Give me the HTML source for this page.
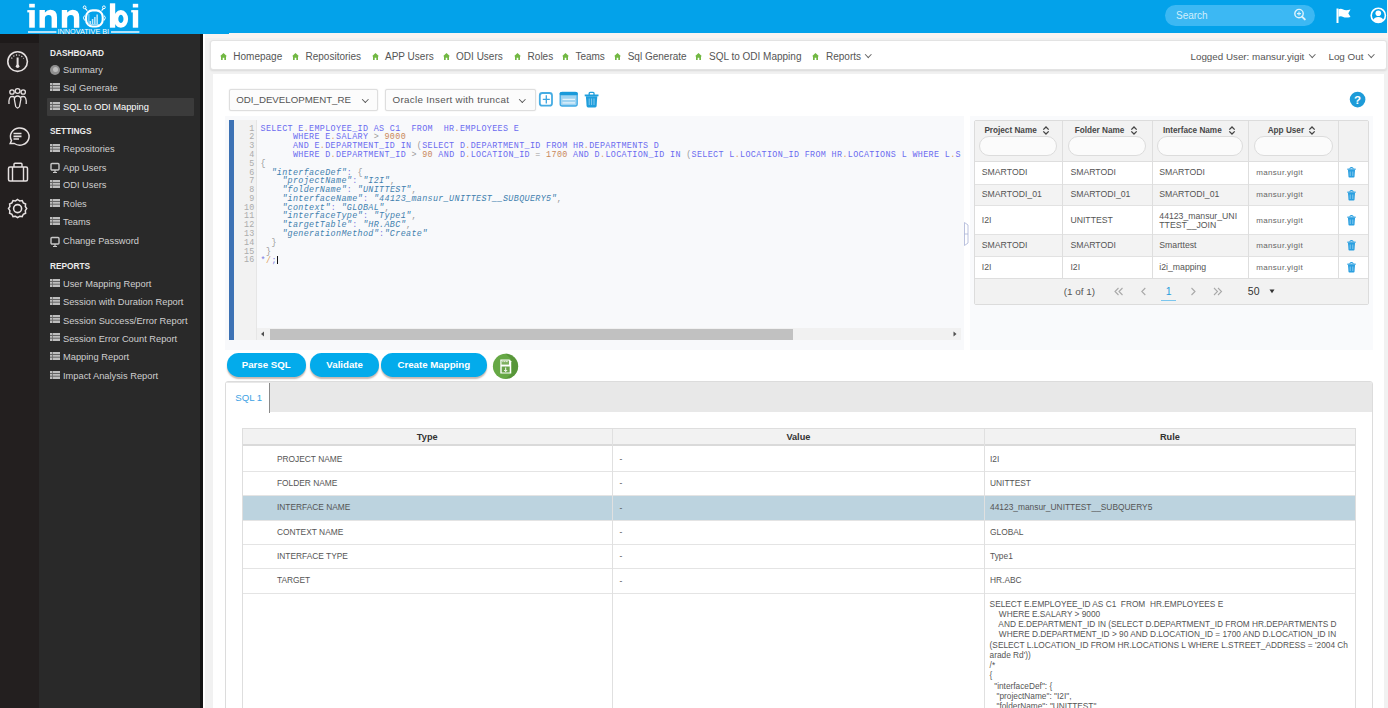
<!DOCTYPE html>
<html><head><meta charset="utf-8">
<style>
*{box-sizing:border-box;margin:0;padding:0}
html,body{width:1388px;height:708px;overflow:hidden;background:#f1f1f1;font-family:"Liberation Sans",sans-serif;position:relative}
.a{position:absolute}
#hdr{left:0;top:0;width:1387px;height:33px;background:#03a2ea}
#side{left:0;top:34px;width:202px;height:674px;background:#292929}
#icol{left:0;top:34px;width:39px;height:674px;background:#231f1f}
#sline{left:199.5px;top:34px;width:3px;height:674px;background:#141414}
#swhite{left:202.5px;top:33px;width:2.5px;height:675px;background:#fff}
#crumb{left:209.5px;top:40px;width:1177.5px;height:29.5px;background:#fff;border:1px solid #e3e3e3;border-radius:3px;box-shadow:0 1px 2px rgba(0,0,0,.1)}
#panel{left:213px;top:74px;width:1171px;height:640px;background:#fff}

.nv{position:absolute;left:63px;font-size:9.3px;color:#cfcfcf;line-height:12px;white-space:nowrap}
.nh{position:absolute;left:50px;font-size:8.3px;font-weight:bold;color:#ececec;line-height:12px;white-space:nowrap}
.li{position:absolute;left:50px;width:10px;height:8px}
.li i{position:absolute;left:0;width:10px;height:1.4px;background:#bdbdbd}
.li b{position:absolute;left:2px;top:0;width:1px;height:8px;background:#262626}

.bc{position:absolute;top:51px;font-size:10px;color:#555;line-height:12px;white-space:nowrap}
.hs{position:absolute;top:52.8px;width:7px;height:7px}
.chev{position:absolute;width:6px;height:6px;border-right:1.1px solid #666;border-bottom:1.1px solid #666;transform:rotate(45deg)}

.dd{position:absolute;top:89.2px;height:21.4px;background:#fcfcfc;border:1px solid #dedede;border-radius:2px;box-shadow:0 1px 1px rgba(0,0,0,.04)}
.ddt{position:absolute;top:94.3px;color:#555;line-height:12px;white-space:nowrap}
#ed{left:225px;top:116.3px;width:738.7px;height:234px;background:#f8f9fb}
#code{position:absolute;left:260.6px;top:124.6px;font-family:"Liberation Mono",monospace;font-size:8.4px;letter-spacing:0.36px;line-height:8.78px;white-space:pre;color:#6b6bf0}
#lnum{position:absolute;left:236px;width:18.6px;top:124.6px;font-family:"Liberation Mono",monospace;font-size:8.4px;letter-spacing:0.33px;line-height:8.78px;white-space:pre;color:#ababab;text-align:right}
.o{color:#e0a060}.n{color:#c9885a}.g{color:#9a9a9a}.p{color:#7b7be0}
.s{color:#3f7fae;font-style:italic}.c{color:#8a8aa0}

.th{position:absolute;font-size:8.2px;font-weight:bold;color:#474747;line-height:10px;white-space:nowrap}
.fi{position:absolute;top:135.5px;height:20.6px;background:#fbfbfb;border:1px solid #dcdcdc;border-radius:10.3px}
.td{position:absolute;font-size:8.7px;color:#555;line-height:9.2px;white-space:nowrap}
.sort{position:absolute;width:8px;height:9px}

.btn{position:absolute;top:353.4px;height:23.4px;border-radius:11.7px;background:#03abeb;color:#fff;font-weight:bold;font-size:9.7px;line-height:23px;text-align:center;box-shadow:0 2px 1.5px rgba(130,100,85,.45)}
.bt{position:absolute;font-size:8.4px;color:#555;line-height:10px;white-space:nowrap}
</style></head><body>
<div id="hdr" class="a"></div>
<svg class="a" style="left:0;top:0;z-index:5" width="160" height="34" viewBox="0 0 160 34">
<g fill="#fff">
<rect x="29.2" y="3.8" width="5.6" height="3.7"/>
<rect x="29.2" y="10.1" width="5.6" height="17.6"/>
<rect x="27.3" y="10.1" width="2.5" height="2.3"/>
<rect x="131.2" y="10.1" width="2.5" height="2.3"/>
<rect x="132.8" y="3.8" width="5.4" height="3.7"/>
<rect x="132.8" y="10.1" width="5.4" height="17.6"/>
<rect x="109.9" y="3.3" width="5.3" height="24.4"/>
<path d="M39.5 10.1H44.9V12.6Q47.1 9.8 50.3 9.8Q57.0 9.8 57.0 17.2V27.7H51.6V18Q51.6 14.9 48.7 14.9Q44.9 14.9 44.9 18.5V27.7H39.5Z" fill="#fff"/><path d="M61.8 10.1H67.2V12.6Q69.39999999999999 9.8 72.6 9.8Q79.3 9.8 79.3 17.2V27.7H73.89999999999999V18Q73.89999999999999 14.9 71.0 14.9Q67.2 14.9 67.2 18.5V27.7H61.8Z" fill="#fff"/>
</g>
<g fill="none" stroke="#fff">


<ellipse cx="120.9" cy="18.9" rx="4.9" ry="6.5" stroke-width="4.6"/>
<rect x="86.1" y="10.4" width="16.6" height="16.1" rx="6.5" stroke-width="2.1"/>
<path d="M84.6 15.5Q82.3 17.5 84.6 20.5M104.2 15.5Q106.5 17.5 104.2 20.5" stroke-width="1"/>
<path d="M85.2 8.3L87.3 10.6M103.5 8.3L101.6 10.6" stroke-width="1.2"/>
<circle cx="84.6" cy="7.3" r="1.4" stroke-width="1"/>
<circle cx="103.9" cy="7.3" r="1.4" stroke-width="1"/>
</g>
<g fill="#bfe6fb">
<rect x="89.5" y="21" width="1.5" height="3"/>
<rect x="91.8" y="19" width="1.5" height="5"/>
<rect x="94.1" y="17" width="1.5" height="7"/>
<rect x="96.4" y="14.5" width="1.5" height="9.5"/>
<rect x="88.4" y="24.1" width="11" height="0.8"/>
<rect x="88.5" y="14" width="0.8" height="10.5"/>
</g>
<g fill="#b3e3fb">
<rect x="28" y="31" width="28.4" height="2"/>
<rect x="111" y="31" width="28.4" height="2"/>
</g>
<text x="57.6" y="34.4" font-family="Liberation Sans" font-size="6.4" fill="#fff" textLength="51.5" lengthAdjust="spacingAndGlyphs">INNOVATIVE BI</text>
</svg>
<div class="a" style="left:1165px;top:5px;width:150px;height:21px;border-radius:11px;background:#3cb8f3"></div>
<div class="a" style="left:1176px;top:10px;font-size:10px;color:#d0eefc;line-height:12px">Search</div>
<svg class="a" style="left:1290px;top:5px" width="20" height="20" viewBox="0 0 20 20"><circle cx="9" cy="8.6" r="4.2" fill="none" stroke="#dff3fd" stroke-width="1.4"/><path d="M9 6.6v4M7 8.6h4" stroke="#dff3fd" stroke-width="1.1"/><path d="M12 11.6l2.8 2.8" stroke="#dff3fd" stroke-width="2" stroke-linecap="round"/></svg>
<svg class="a" style="left:1334px;top:6px" width="20" height="20" viewBox="0 0 20 20"><path d="M3.5 2.5V17" stroke="#fff" stroke-width="2"/><path d="M4.5 3.3Q7 2.2 9.2 3.5Q11.5 4.8 16.5 3.6L14.3 7.3L16.5 11Q11.5 12.2 9.2 10.9Q7 9.6 4.5 10.7Z" fill="#fff"/></svg>
<svg class="a" style="left:1368px;top:5px" width="20" height="22" viewBox="0 0 20 22"><circle cx="10.3" cy="10.4" r="7.1" fill="none" stroke="#fff" stroke-width="1.6"/><circle cx="10.3" cy="8.3" r="2.8" fill="#fff"/><path d="M5.2 15.2Q6.5 11.9 10.3 11.9Q14.1 11.9 15.4 15.2Q13.5 17.3 10.3 17.3Q7.1 17.3 5.2 15.2Z" fill="#fff"/></svg>
<div id="side" class="a"></div>
<div id="icol" class="a"></div>
<div id="sline" class="a"></div><div id="swhite" class="a"></div><div class="a" style="left:205px;top:33px;width:1183px;height:5px;background:#f8f4f2"></div><div class="a" style="left:0;top:33px;width:229px;height:1px;background:#03a2ea"></div>
<div class="a" style="left:0;top:34px;width:39px;height:9px;background:#1e1a1a"></div>
<div class="a" style="left:0;top:43px;width:39px;height:37px;background:#272323"></div>
<div class="a" style="left:46.5px;top:98px;width:147px;height:18px;background:#3b3b3b;border-radius:1px"></div>
<div class="nh" style="top:46.5px">DASHBOARD</div>
<div class="nh" style="top:125.4px">SETTINGS</div>
<div class="nh" style="top:260.0px">REPORTS</div>
<div class="nv" style="top:63.7px;color:#cfcfcf">Summary</div>
<div class="a" style="left:50px;top:64.7px;width:10px;height:10px;border-radius:50%;background:#8f8f8f"><div class="a" style="left:3px;top:2px;width:5px;height:5px;border-radius:50%;background:#bdbdbd"></div></div>
<div class="nv" style="top:82.0px;color:#cfcfcf">Sql Generate</div>
<svg class="a" style="left:50px;top:83px" width="10" height="8" viewBox="0 0 10 8"><rect x="0" y="0" width="10" height="8" fill="#bdbdbd"/><path d="M0 2.5H10M0 5.2H10" stroke="#5a5a5a" stroke-width="0.9"/><path d="M2.5 0V8" stroke="#6a6a6a" stroke-width="0.8"/></svg>
<div class="nv" style="top:100.8px;color:#ffffff">SQL to ODI Mapping</div>
<svg class="a" style="left:50px;top:102px" width="10" height="8" viewBox="0 0 10 8"><rect x="0" y="0" width="10" height="8" fill="#bdbdbd"/><path d="M0 2.5H10M0 5.2H10" stroke="#5a5a5a" stroke-width="0.9"/><path d="M2.5 0V8" stroke="#6a6a6a" stroke-width="0.8"/></svg>
<div class="nv" style="top:143.2px;color:#cfcfcf">Repositories</div>
<svg class="a" style="left:50px;top:144px" width="10" height="8" viewBox="0 0 10 8"><rect x="0" y="0" width="10" height="8" fill="#bdbdbd"/><path d="M0 2.5H10M0 5.2H10" stroke="#5a5a5a" stroke-width="0.9"/><path d="M2.5 0V8" stroke="#6a6a6a" stroke-width="0.8"/></svg>
<div class="nv" style="top:161.6px;color:#cfcfcf">App Users</div>
<svg class="a" style="left:49px;top:162.1px" width="12" height="12" viewBox="0 0 12 12"><rect x="2" y="1.5" width="8" height="6.5" rx="1" fill="none" stroke="#c8c8c8" stroke-width="1.4"/><path d="M6 8v2.5M4 10.5h4" stroke="#c8c8c8" stroke-width="1.2"/></svg>
<div class="nv" style="top:179.4px;color:#cfcfcf">ODI Users</div>
<svg class="a" style="left:50px;top:180px" width="10" height="8" viewBox="0 0 10 8"><rect x="0" y="0" width="10" height="8" fill="#bdbdbd"/><path d="M0 2.5H10M0 5.2H10" stroke="#5a5a5a" stroke-width="0.9"/><path d="M2.5 0V8" stroke="#6a6a6a" stroke-width="0.8"/></svg>
<div class="nv" style="top:197.8px;color:#cfcfcf">Roles</div>
<svg class="a" style="left:50px;top:199px" width="10" height="8" viewBox="0 0 10 8"><rect x="0" y="0" width="10" height="8" fill="#bdbdbd"/><path d="M0 2.5H10M0 5.2H10" stroke="#5a5a5a" stroke-width="0.9"/><path d="M2.5 0V8" stroke="#6a6a6a" stroke-width="0.8"/></svg>
<div class="nv" style="top:216.2px;color:#cfcfcf">Teams</div>
<svg class="a" style="left:50px;top:217px" width="10" height="8" viewBox="0 0 10 8"><rect x="0" y="0" width="10" height="8" fill="#bdbdbd"/><path d="M0 2.5H10M0 5.2H10" stroke="#5a5a5a" stroke-width="0.9"/><path d="M2.5 0V8" stroke="#6a6a6a" stroke-width="0.8"/></svg>
<div class="nv" style="top:235.0px;color:#cfcfcf">Change Password</div>
<svg class="a" style="left:49px;top:235.5px" width="12" height="12" viewBox="0 0 12 12"><rect x="2" y="1.5" width="8" height="6.5" rx="1" fill="none" stroke="#c8c8c8" stroke-width="1.4"/><path d="M6 8v2.5M4 10.5h4" stroke="#c8c8c8" stroke-width="1.2"/></svg>
<div class="nv" style="top:277.5px;color:#cfcfcf">User Mapping Report</div>
<svg class="a" style="left:50px;top:279px" width="10" height="8" viewBox="0 0 10 8"><rect x="0" y="0" width="10" height="8" fill="#bdbdbd"/><path d="M0 2.5H10M0 5.2H10" stroke="#5a5a5a" stroke-width="0.9"/><path d="M2.5 0V8" stroke="#6a6a6a" stroke-width="0.8"/></svg>
<div class="nv" style="top:296.0px;color:#cfcfcf">Session with Duration Report</div>
<svg class="a" style="left:50px;top:297px" width="10" height="8" viewBox="0 0 10 8"><rect x="0" y="0" width="10" height="8" fill="#bdbdbd"/><path d="M0 2.5H10M0 5.2H10" stroke="#5a5a5a" stroke-width="0.9"/><path d="M2.5 0V8" stroke="#6a6a6a" stroke-width="0.8"/></svg>
<div class="nv" style="top:314.5px;color:#cfcfcf">Session Success/Error Report</div>
<svg class="a" style="left:50px;top:315px" width="10" height="8" viewBox="0 0 10 8"><rect x="0" y="0" width="10" height="8" fill="#bdbdbd"/><path d="M0 2.5H10M0 5.2H10" stroke="#5a5a5a" stroke-width="0.9"/><path d="M2.5 0V8" stroke="#6a6a6a" stroke-width="0.8"/></svg>
<div class="nv" style="top:332.5px;color:#cfcfcf">Session Error Count Report</div>
<svg class="a" style="left:50px;top:333px" width="10" height="8" viewBox="0 0 10 8"><rect x="0" y="0" width="10" height="8" fill="#bdbdbd"/><path d="M0 2.5H10M0 5.2H10" stroke="#5a5a5a" stroke-width="0.9"/><path d="M2.5 0V8" stroke="#6a6a6a" stroke-width="0.8"/></svg>
<div class="nv" style="top:351.0px;color:#cfcfcf">Mapping Report</div>
<svg class="a" style="left:50px;top:352px" width="10" height="8" viewBox="0 0 10 8"><rect x="0" y="0" width="10" height="8" fill="#bdbdbd"/><path d="M0 2.5H10M0 5.2H10" stroke="#5a5a5a" stroke-width="0.9"/><path d="M2.5 0V8" stroke="#6a6a6a" stroke-width="0.8"/></svg>
<div class="nv" style="top:369.5px;color:#cfcfcf">Impact Analysis Report</div>
<svg class="a" style="left:50px;top:371px" width="10" height="8" viewBox="0 0 10 8"><rect x="0" y="0" width="10" height="8" fill="#bdbdbd"/><path d="M0 2.5H10M0 5.2H10" stroke="#5a5a5a" stroke-width="0.9"/><path d="M2.5 0V8" stroke="#6a6a6a" stroke-width="0.8"/></svg>
<svg class="a" style="left:0;top:44px" width="39" height="180" viewBox="0 44 39 180">
<g fill="none" stroke="#e6e1e1" stroke-width="1.6">
<circle cx="17.6" cy="61.6" r="9.8"/>
<path d="M11.5 58.5A7 7 0 0 1 23.7 58.5" stroke-width="1.2" stroke-dasharray="1.2 1.6"/>
<path d="M17.6 57.5V65" stroke-width="2"/>
<circle cx="17.6" cy="66.3" r="1.8" fill="#e6e1e1" stroke="none"/>
<circle cx="12" cy="92" r="2.2" stroke-width="1.3"/><circle cx="17.6" cy="91" r="2.4" stroke-width="1.3"/><circle cx="23.2" cy="92" r="2.2" stroke-width="1.3"/>
<path d="M9 104Q8.5 96.5 12 96.5Q14 96.5 14.5 97.5M26.2 104Q26.7 96.5 23.2 96.5Q21.2 96.5 20.7 97.5M14.3 99Q14.8 96 17.6 96Q20.4 96 20.9 99L19.5 106.5Q17.6 109.5 15.7 106.5Z" stroke-width="1.3"/>
<path d="M10.2 143.5L11.5 140.5A9.3 8.6 0 1 1 14.3 143.5Z" stroke-width="1.5"/>
<path d="M13.5 133.5H21.5M13.5 136.3H21.5M13.5 139H19" stroke-width="1.7"/>
<rect x="8.5" y="167" width="19" height="14" rx="1.5" stroke-width="1.5"/>
<path d="M14 167V164.3Q14 163.3 15 163.3H21Q22 163.3 22 164.3V167M12.5 167V181M23.5 167V181" stroke-width="1.4"/>
<path d="M17.6 199.5l2.1 1.4 2.5-.3 1.1 2.3 2.3 1.1-.3 2.5 1.4 2.1-1.4 2.1.3 2.5-2.3 1.1-1.1 2.3-2.5-.3-2.1 1.4-2.1-1.4-2.5.3-1.1-2.3-2.3-1.1.3-2.5-1.4-2.1 1.4-2.1-.3-2.5 2.3-1.1 1.1-2.3 2.5.3z" stroke-width="1.5"/>
<circle cx="17.6" cy="208.6" r="4" stroke-width="1.6"/>
</g></svg>
<div id="crumb" class="a"></div>
<div id="panel" class="a"></div>
<svg class="hs" style="left:219.5px" viewBox="0 0 7 7"><path d="M3.5 0L7 3.3H6V7H4.3V4.8H2.7V7H1V3.3H0Z" fill="#72b843"/></svg>
<div class="bc" style="left:233.3px">Homepage</div>
<svg class="hs" style="left:291.5px" viewBox="0 0 7 7"><path d="M3.5 0L7 3.3H6V7H4.3V4.8H2.7V7H1V3.3H0Z" fill="#72b843"/></svg>
<div class="bc" style="left:305.5px">Repositories</div>
<svg class="hs" style="left:371.5px" viewBox="0 0 7 7"><path d="M3.5 0L7 3.3H6V7H4.3V4.8H2.7V7H1V3.3H0Z" fill="#72b843"/></svg>
<div class="bc" style="left:385px">APP Users</div>
<svg class="hs" style="left:442.8px" viewBox="0 0 7 7"><path d="M3.5 0L7 3.3H6V7H4.3V4.8H2.7V7H1V3.3H0Z" fill="#72b843"/></svg>
<div class="bc" style="left:456.1px">ODI Users</div>
<svg class="hs" style="left:513.7px" viewBox="0 0 7 7"><path d="M3.5 0L7 3.3H6V7H4.3V4.8H2.7V7H1V3.3H0Z" fill="#72b843"/></svg>
<div class="bc" style="left:527.6px">Roles</div>
<svg class="hs" style="left:562.0px" viewBox="0 0 7 7"><path d="M3.5 0L7 3.3H6V7H4.3V4.8H2.7V7H1V3.3H0Z" fill="#72b843"/></svg>
<div class="bc" style="left:575.4px">Teams</div>
<svg class="hs" style="left:613.5px" viewBox="0 0 7 7"><path d="M3.5 0L7 3.3H6V7H4.3V4.8H2.7V7H1V3.3H0Z" fill="#72b843"/></svg>
<div class="bc" style="left:627.7px">Sql Generate</div>
<svg class="hs" style="left:695.2px" viewBox="0 0 7 7"><path d="M3.5 0L7 3.3H6V7H4.3V4.8H2.7V7H1V3.3H0Z" fill="#72b843"/></svg>
<div class="bc" style="left:709px">SQL to ODI Mapping</div>
<svg class="hs" style="left:812.2px" viewBox="0 0 7 7"><path d="M3.5 0L7 3.3H6V7H4.3V4.8H2.7V7H1V3.3H0Z" fill="#72b843"/></svg>
<div class="bc" style="left:826px">Reports</div>
<div class="chev" style="left:865.5px;top:52px;width:4.5px;height:4.5px"></div>
<div class="bc" style="left:1190.5px;font-size:9.8px">Logged User: mansur.yigit</div>
<div class="chev" style="left:1309.5px;top:52px;width:4.5px;height:4.5px"></div>
<div class="bc" style="left:1328.4px;font-size:9.9px">Log Out</div>
<div class="chev" style="left:1368.5px;top:52px;width:4.5px;height:4.5px"></div>
<div class="dd" style="left:229px;width:149.3px;box-shadow:0 0 1.5px rgba(0,0,0,.12)"></div>
<div class="ddt" style="left:236.3px;font-size:9.7px">ODI_DEVELOPMENT_RE</div>
<div class="chev" style="left:363.3px;top:97.3px;width:4.6px;height:4.6px;border-color:#555"></div>
<div class="dd" style="left:385.3px;width:151px;box-shadow:0 0 1.5px rgba(0,0,0,.12)"></div>
<div class="ddt" style="left:392.5px;font-size:9.8px;letter-spacing:0.3px;top:94.3px">Oracle Insert with truncat</div>
<div class="chev" style="left:519.7px;top:97.3px;width:4.6px;height:4.6px;border-color:#555"></div>
<svg class="a" style="left:538px;top:91px" width="62" height="18" viewBox="538 91 62 18">
<rect x="539.8" y="93" width="12.2" height="12.7" rx="2.5" fill="none" stroke="#45ace3" stroke-width="1.8"/>
<path d="M546.3 95.3V103.6M542.8 99.4H549.8" stroke="#3aa4e0" stroke-width="1.3"/>
<rect x="560.2" y="92.4" width="17" height="13.6" rx="2" fill="#9fd3f1" stroke="#3fa9e4" stroke-width="1.3"/>
<rect x="559.6" y="92" width="18.2" height="3.3" rx="1.5" fill="#1b9ada"/>
<path d="M562.5 99.3H575M562.5 102.8H575" stroke="#e5f4fc" stroke-width="1.2"/>
<path d="M584.7 95.4H598.5" stroke="#1f9edc" stroke-width="1.8"/>
<path d="M589.2 95V93.3Q589.2 92.4 590.1 92.4H593.1Q594 92.4 594 93.3V95" fill="none" stroke="#1f9edc" stroke-width="1.3"/>
<path d="M585.9 96.2H597.3L596.6 106.1Q596.5 107.4 595.2 107.4H588Q586.7 107.4 586.6 106.1Z" fill="#1f9edc"/>
<path d="M589.2 98.5V105M591.6 98.5V105M594 98.5V105" stroke="#8ccdef" stroke-width="0.9"/>
</svg>
<svg class="a" style="left:1348px;top:91px" width="19" height="18" viewBox="0 0 19 18"><circle cx="9.6" cy="8.6" r="7.8" fill="#1d9bd8"/><text x="9.6" y="12.7" font-family="Liberation Sans" font-weight="bold" font-size="11.5" fill="#fff" text-anchor="middle">?</text></svg>
<div id="ed" class="a"></div>
<div class="a" style="left:229px;top:120.4px;width:4.5px;height:220px;background:#3d72b4"></div>
<div class="a" style="left:233.5px;top:120.4px;width:23.5px;height:220px;background:#f2f2f2;border-right:1px solid #e6e6e6"></div>
<div id="lnum">1
2
3
4
5
6
7
8
9
10
11
12
13
14
15
16</div>
<div id="code">SELECT E<span class="o">.</span>EMPLOYEE_ID AS C1  FROM  HR<span class="o">.</span>EMPLOYEES E
      WHERE E<span class="o">.</span>SALARY <span class="g">&gt;</span> <span class="n">9000</span>
      AND E<span class="o">.</span>DEPARTMENT_ID IN <span class="g">(</span>SELECT D<span class="o">.</span>DEPARTMENT_ID FROM HR<span class="o">.</span>DEPARTMENTS D
      WHERE D<span class="o">.</span>DEPARTMENT_ID <span class="g">&gt;</span> <span class="n">90</span> AND D<span class="o">.</span>LOCATION_ID <span class="g">=</span> <span class="n">1700</span> AND D<span class="o">.</span>LOCATION_ID IN <span class="g">(</span>SELECT L<span class="o">.</span>LOCATION_ID FROM HR<span class="o">.</span>LOCATIONS L WHERE L<span class="o">.</span>S
<span class="g">{</span>
  <span class="s">"interfaceDef"</span><span class="p">:</span> <span class="g">{</span>
    <span class="s">"projectName"</span><span class="p">:</span> <span class="s">"I2I"</span><span class="g">,</span>
    <span class="s">"folderName"</span><span class="p">:</span> <span class="s">"UNITTEST"</span><span class="g">,</span>
    <span class="s">"interfaceName"</span><span class="p">:</span> <span class="s">"44123_mansur_UNITTEST__SUBQUERY5"</span><span class="g">,</span>
    <span class="s">"context"</span><span class="p">:</span> <span class="s">"GLOBAL"</span><span class="g">,</span>
    <span class="s">"interfaceType"</span><span class="p">:</span> <span class="s">"Type1"</span><span class="g">,</span>
    <span class="s">"targetTable"</span><span class="p">:</span> <span class="s">"HR.ABC"</span><span class="g">,</span>
    <span class="s">"generationMethod"</span><span class="p">:</span><span class="s">"Create"</span>
  <span class="g">}</span>
 <span class="g">}</span>
<span class="p">*</span><span class="o">/</span><span class="p">;</span><span style="display:inline-block;width:1px;height:8px;background:#111;vertical-align:-1px"></span></div>
<div class="a" style="left:257px;top:328px;width:704px;height:12px;background:#f1f1f1"></div>
<div class="a" style="left:270px;top:329px;width:523px;height:10.5px;background:#c1c1c1"></div>
<svg class="a" style="left:256px;top:328px" width="14" height="12" viewBox="0 0 14 12"><path d="M5 6L8 3.5V8.5Z" fill="#505050"/></svg>
<svg class="a" style="left:948px;top:328px" width="13" height="12" viewBox="0 0 13 12"><path d="M8.5 6L5.5 3.5V8.5Z" fill="#505050"/></svg>
<svg class="a" style="left:963px;top:220px" width="7" height="28" viewBox="0 0 7 28"><path d="M1.5 2.5L5 5V23L1.5 25.5Z" fill="none" stroke="#a9b3d6" stroke-width="0.8"/><path d="M1.5 14H5" stroke="#a9b3d6" stroke-width="0.8"/></svg>
<div class="a" style="left:969.5px;top:115.8px;width:403.2px;height:234.5px;background:#f9fafc"></div>
<div class="a" style="left:974.2px;top:120.3px;width:394.8px;height:184.3px;background:#fff;border:1px solid #dcdcdc;border-radius:2px;overflow:hidden"><div class="a" style="left:0;top:0;width:100%;height:41.2px;background:#f2f2f2;border-bottom:1px solid #dedede"></div><div class="a" style="left:0;top:62.7px;width:100%;height:22.5px;background:#f3f3f3;border-top:1px solid #e2e2e2;border-bottom:1px solid #e2e2e2"></div><div class="a" style="left:0;top:112.8px;width:100%;height:22.8px;background:#f3f3f3;border-top:1px solid #e2e2e2;border-bottom:1px solid #e2e2e2"></div><div class="a" style="left:0;top:157px;width:100%;height:27px;background:#f2f2f2;border-top:1px solid #dedede"></div></div>
<div class="a" style="left:1061.9px;top:121px;width:1px;height:157px;background:#dedede"></div>
<div class="a" style="left:1151.7px;top:121px;width:1px;height:157px;background:#dedede"></div>
<div class="a" style="left:1248.1px;top:121px;width:1px;height:157px;background:#dedede"></div>
<div class="a" style="left:1337.7px;top:121px;width:1px;height:157px;background:#dedede"></div>
<div class="th" style="left:984.4px;top:126px">Project Name</div>
<svg class="sort" style="left:1042.0px;top:126.2px" viewBox="0 0 8 9"><path d="M1.3 3.6L4 1L6.7 3.6M1.3 5.4L4 8L6.7 5.4" fill="none" stroke="#444" stroke-width="1.3"/></svg>
<div class="th" style="left:1074.7px;top:126px">Folder Name</div>
<svg class="sort" style="left:1129.6px;top:126.2px" viewBox="0 0 8 9"><path d="M1.3 3.6L4 1L6.7 3.6M1.3 5.4L4 8L6.7 5.4" fill="none" stroke="#444" stroke-width="1.3"/></svg>
<div class="th" style="left:1163px;top:126px">Interface Name</div>
<svg class="sort" style="left:1228.0px;top:126.2px" viewBox="0 0 8 9"><path d="M1.3 3.6L4 1L6.7 3.6M1.3 5.4L4 8L6.7 5.4" fill="none" stroke="#444" stroke-width="1.3"/></svg>
<div class="th" style="left:1267.7px;top:126px">App User</div>
<svg class="sort" style="left:1308.4px;top:126.2px" viewBox="0 0 8 9"><path d="M1.3 3.6L4 1L6.7 3.6M1.3 5.4L4 8L6.7 5.4" fill="none" stroke="#444" stroke-width="1.3"/></svg>
<div class="fi" style="left:978.9px;width:78.0px"></div>
<div class="fi" style="left:1067.9px;width:78.0px"></div>
<div class="fi" style="left:1157px;width:86.3px"></div>
<div class="fi" style="left:1253.5px;width:79.5px"></div>
<div class="td" style="left:981.8px;top:168.1px;">SMARTODI</div>
<div class="td" style="left:1070.4px;top:168.1px;">SMARTODI</div>
<div class="td" style="left:1159.3px;top:168.1px;">SMARTODI</div>
<div class="td" style="left:1256.2px;top:168.1px;font-size:8px;letter-spacing:0.34px;color:#666;">mansur.yigit</div>
<svg class="a" style="left:1346.8px;top:167.4px" width="9" height="11" viewBox="0 0 9 11"><path d="M0.3 2.2H8.7" stroke="#2a9fe0" stroke-width="1.2"/><path d="M3 2V1.2Q3 .5 3.7 .5H5.3Q6 .5 6 1.2V2" fill="none" stroke="#2a9fe0" stroke-width="1"/><path d="M1 3H8L7.5 9.8Q7.4 10.5 6.7 10.5H2.3Q1.6 10.5 1.5 9.8Z" fill="#2a9fe0"/><path d="M3.2 4.5V9M5.8 4.5V9" stroke="#9bd3f2" stroke-width="0.8"/></svg>
<div class="td" style="left:981.8px;top:190.2px;">SMARTODI_01</div>
<div class="td" style="left:1070.4px;top:190.2px;">SMARTODI_01</div>
<div class="td" style="left:1159.3px;top:190.2px;">SMARTODI_01</div>
<div class="td" style="left:1256.2px;top:190.2px;font-size:8px;letter-spacing:0.34px;color:#666;">mansur.yigit</div>
<svg class="a" style="left:1346.8px;top:189.5px" width="9" height="11" viewBox="0 0 9 11"><path d="M0.3 2.2H8.7" stroke="#2a9fe0" stroke-width="1.2"/><path d="M3 2V1.2Q3 .5 3.7 .5H5.3Q6 .5 6 1.2V2" fill="none" stroke="#2a9fe0" stroke-width="1"/><path d="M1 3H8L7.5 9.8Q7.4 10.5 6.7 10.5H2.3Q1.6 10.5 1.5 9.8Z" fill="#2a9fe0"/><path d="M3.2 4.5V9M5.8 4.5V9" stroke="#9bd3f2" stroke-width="0.8"/></svg>
<div class="td" style="left:981.8px;top:215.6px;">I2I</div>
<div class="td" style="left:1070.4px;top:215.6px;">UNITTEST</div>
<div class="td" style="left:1159.3px;top:211.8px">44123_mansur_UNI<br>TTEST__JOIN</div>
<div class="td" style="left:1256.2px;top:215.6px;font-size:8px;letter-spacing:0.34px;color:#666;">mansur.yigit</div>
<svg class="a" style="left:1346.8px;top:214.9px" width="9" height="11" viewBox="0 0 9 11"><path d="M0.3 2.2H8.7" stroke="#2a9fe0" stroke-width="1.2"/><path d="M3 2V1.2Q3 .5 3.7 .5H5.3Q6 .5 6 1.2V2" fill="none" stroke="#2a9fe0" stroke-width="1"/><path d="M1 3H8L7.5 9.8Q7.4 10.5 6.7 10.5H2.3Q1.6 10.5 1.5 9.8Z" fill="#2a9fe0"/><path d="M3.2 4.5V9M5.8 4.5V9" stroke="#9bd3f2" stroke-width="0.8"/></svg>
<div class="td" style="left:981.8px;top:240.7px;">SMARTODI</div>
<div class="td" style="left:1070.4px;top:240.7px;">SMARTODI</div>
<div class="td" style="left:1159.3px;top:240.7px;">Smarttest</div>
<div class="td" style="left:1256.2px;top:240.7px;font-size:8px;letter-spacing:0.34px;color:#666;">mansur.yigit</div>
<svg class="a" style="left:1346.8px;top:240.0px" width="9" height="11" viewBox="0 0 9 11"><path d="M0.3 2.2H8.7" stroke="#2a9fe0" stroke-width="1.2"/><path d="M3 2V1.2Q3 .5 3.7 .5H5.3Q6 .5 6 1.2V2" fill="none" stroke="#2a9fe0" stroke-width="1"/><path d="M1 3H8L7.5 9.8Q7.4 10.5 6.7 10.5H2.3Q1.6 10.5 1.5 9.8Z" fill="#2a9fe0"/><path d="M3.2 4.5V9M5.8 4.5V9" stroke="#9bd3f2" stroke-width="0.8"/></svg>
<div class="td" style="left:981.8px;top:262.7px;">I2I</div>
<div class="td" style="left:1070.4px;top:262.7px;">I2I</div>
<div class="td" style="left:1159.3px;top:262.7px;">i2i_mapping</div>
<div class="td" style="left:1256.2px;top:262.7px;font-size:8px;letter-spacing:0.34px;color:#666;">mansur.yigit</div>
<svg class="a" style="left:1346.8px;top:262.0px" width="9" height="11" viewBox="0 0 9 11"><path d="M0.3 2.2H8.7" stroke="#2a9fe0" stroke-width="1.2"/><path d="M3 2V1.2Q3 .5 3.7 .5H5.3Q6 .5 6 1.2V2" fill="none" stroke="#2a9fe0" stroke-width="1"/><path d="M1 3H8L7.5 9.8Q7.4 10.5 6.7 10.5H2.3Q1.6 10.5 1.5 9.8Z" fill="#2a9fe0"/><path d="M3.2 4.5V9M5.8 4.5V9" stroke="#9bd3f2" stroke-width="0.8"/></svg>
<div class="td" style="left:1063.7px;top:285.8px;font-size:9.9px;line-height:11px;color:#555">(1 of 1)</div>
<svg class="a" style="left:1110px;top:286px" width="115" height="11" viewBox="1110 286 115 11">
<g fill="none" stroke="#a9a9a9" stroke-width="1.1">
<path d="M1118.5 288L1115 291.5L1118.5 295M1122.5 288L1119 291.5L1122.5 295"/>
<path d="M1145.3 288L1141.8 291.5L1145.3 295"/>
<path d="M1191.5 288L1195 291.5L1191.5 295"/>
<path d="M1214 288L1217.5 291.5L1214 295M1218 288L1221.5 291.5L1218 295"/>
</g></svg>
<div class="td" style="left:1165.8px;top:285.8px;font-size:10.5px;line-height:11px;color:#2a9ddc">1</div>
<div class="a" style="left:1160.5px;top:299.5px;width:15.8px;height:1px;background:#7cc6ee"></div>
<div class="td" style="left:1247.8px;top:285.8px;font-size:10.5px;line-height:11px;color:#333">50</div>
<svg class="a" style="left:1269px;top:289px" width="6" height="5" viewBox="0 0 6 5"><path d="M0.5 0.5H5.5L3 4.2Z" fill="#333"/></svg>
<div class="btn" style="left:226.5px;width:79.4px">Parse SQL</div>
<div class="btn" style="left:309.8px;width:69.7px">Validate</div>
<div class="btn" style="left:381px;width:105.5px">Create Mapping</div>
<svg class="a" style="left:492px;top:352.5px" width="27" height="27" viewBox="0 0 27 27"><circle cx="13.5" cy="13.3" r="12.6" fill="#66a845"/><path d="M13.5 .6A12.7 12.7 0 0 1 26.2 13.3A12.7 12.7 0 0 1 13.5 26L20 20L19 6Z" fill="#4e8a32" opacity=".6"/>
<path d="M8.3 6.5H17.5L19.2 8.2V20.5H8.3Z" fill="#fff"/><rect x="9.5" y="7.6" width="7.5" height="4" fill="#7fb060"/><path d="M10.3 8.6h1.2M12 8.6h1.2M13.7 8.6h2" stroke="#fff" stroke-width=".8"/><rect x="9.7" y="13.5" width="8" height="6" fill="#6aa34a"/><path d="M13.7 14.5V18.3M12.2 17L13.7 18.6L15.2 17" fill="none" stroke="#fff" stroke-width="1"/></svg>
<div class="a" style="left:224.7px;top:380.8px;width:1148.5px;height:340px;background:#fff;border:1px solid #dcdcdc;border-radius:3px"></div>
<div class="a" style="left:225.7px;top:381.8px;width:1146.5px;height:30.6px;background:#e8e8e8;border-radius:2px 2px 0 0"></div>
<div class="a" style="left:225.5px;top:383px;width:44.3px;height:29.5px;background:#fff;border-right:1.3px solid #8a8a8a"></div>
<div class="a" style="left:235.3px;top:391.6px;font-size:9.65px;color:#3da2e4;line-height:12px">SQL 1</div>
<div class="a" style="left:242.1px;top:428.2px;width:1113.5px;height:300px;border:1px solid #dedede;background:#fff"></div>
<div class="a" style="left:243.1px;top:429.2px;width:1111.5px;height:17.3px;background:#f2f2f2;border-bottom:2px solid #dadada"></div>
<div class="a" style="left:243.1px;top:448.2px;width:1111.5px;height:22.8px;background:#fff"></div>
<div class="a" style="left:243.1px;top:471.0px;width:1111.5px;height:1px;background:#e4e4e4"></div>
<div class="a" style="left:243.1px;top:472.0px;width:1111.5px;height:23.3px;background:#fff"></div>
<div class="a" style="left:243.1px;top:495.3px;width:1111.5px;height:1px;background:#e4e4e4"></div>
<div class="a" style="left:243.1px;top:496.3px;width:1111.5px;height:23.5px;background:#bcd3df"></div>
<div class="a" style="left:243.1px;top:519.8px;width:1111.5px;height:1px;background:#e4e4e4"></div>
<div class="a" style="left:243.1px;top:520.8px;width:1111.5px;height:23.2px;background:#fff"></div>
<div class="a" style="left:243.1px;top:544.0px;width:1111.5px;height:1px;background:#e4e4e4"></div>
<div class="a" style="left:243.1px;top:545.0px;width:1111.5px;height:23.3px;background:#fff"></div>
<div class="a" style="left:243.1px;top:568.3px;width:1111.5px;height:1px;background:#e4e4e4"></div>
<div class="a" style="left:243.1px;top:569.3px;width:1111.5px;height:23.2px;background:#fff"></div>
<div class="a" style="left:243.1px;top:592.5px;width:1111.5px;height:1px;background:#e4e4e4"></div>
<div class="a" style="left:612.0px;top:429px;width:1px;height:290px;background:#e0e0e0"></div>
<div class="a" style="left:983.8px;top:429px;width:1px;height:290px;background:#e0e0e0"></div>
<div class="a" style="left:242px;top:432.2px;width:370.5px;text-align:center;font-size:9.2px;font-weight:bold;color:#333;line-height:11px">Type</div>
<div class="a" style="left:612.5px;top:432.2px;width:371.8px;text-align:center;font-size:9.2px;font-weight:bold;color:#333;line-height:11px">Value</div>
<div class="a" style="left:984.3px;top:432.2px;width:371.3px;text-align:center;font-size:9.2px;font-weight:bold;color:#333;line-height:11px">Rule</div>
<div class="bt" style="left:276.9px;top:453.9px">PROJECT NAME</div>
<div class="bt" style="left:619.5px;top:454.4px">-</div>
<div class="bt" style="left:990px;top:453.9px">I2I</div>
<div class="bt" style="left:276.9px;top:477.9px">FOLDER NAME</div>
<div class="bt" style="left:619.5px;top:478.4px">-</div>
<div class="bt" style="left:990px;top:477.9px">UNITTEST</div>
<div class="bt" style="left:276.9px;top:502.3px">INTERFACE NAME</div>
<div class="bt" style="left:619.5px;top:502.8px">-</div>
<div class="bt" style="left:990px;top:502.3px">44123_mansur_UNITTEST__SUBQUERY5</div>
<div class="bt" style="left:276.9px;top:526.7px">CONTEXT NAME</div>
<div class="bt" style="left:619.5px;top:527.2px">-</div>
<div class="bt" style="left:990px;top:526.7px">GLOBAL</div>
<div class="bt" style="left:276.9px;top:550.9px">INTERFACE TYPE</div>
<div class="bt" style="left:619.5px;top:551.4px">-</div>
<div class="bt" style="left:990px;top:550.9px">Type1</div>
<div class="bt" style="left:276.9px;top:575.2px">TARGET</div>
<div class="bt" style="left:619.5px;top:575.7px">-</div>
<div class="bt" style="left:990px;top:575.2px">HR.ABC</div>
<div class="bt" style="left:989.6px;top:598.6px;font-size:8.3px;line-height:10.25px;white-space:pre">SELECT E.EMPLOYEE_ID AS C1  FROM  HR.EMPLOYEES E
    WHERE E.SALARY &gt; 9000
    AND E.DEPARTMENT_ID IN (SELECT D.DEPARTMENT_ID FROM HR.DEPARTMENTS D
    WHERE D.DEPARTMENT_ID &gt; 90 AND D.LOCATION_ID = 1700 AND D.LOCATION_ID IN
(SELECT L.LOCATION_ID FROM HR.LOCATIONS L WHERE L.STREET_ADDRESS = '2004 Ch
arade Rd'))
/*
{
  "interfaceDef": {
   "projectName": "I2I",
   "folderName": "UNITTEST",
   "interfaceName": "44123_mansur_UNITTEST__SUBQUERY5",</div>
</body></html>
